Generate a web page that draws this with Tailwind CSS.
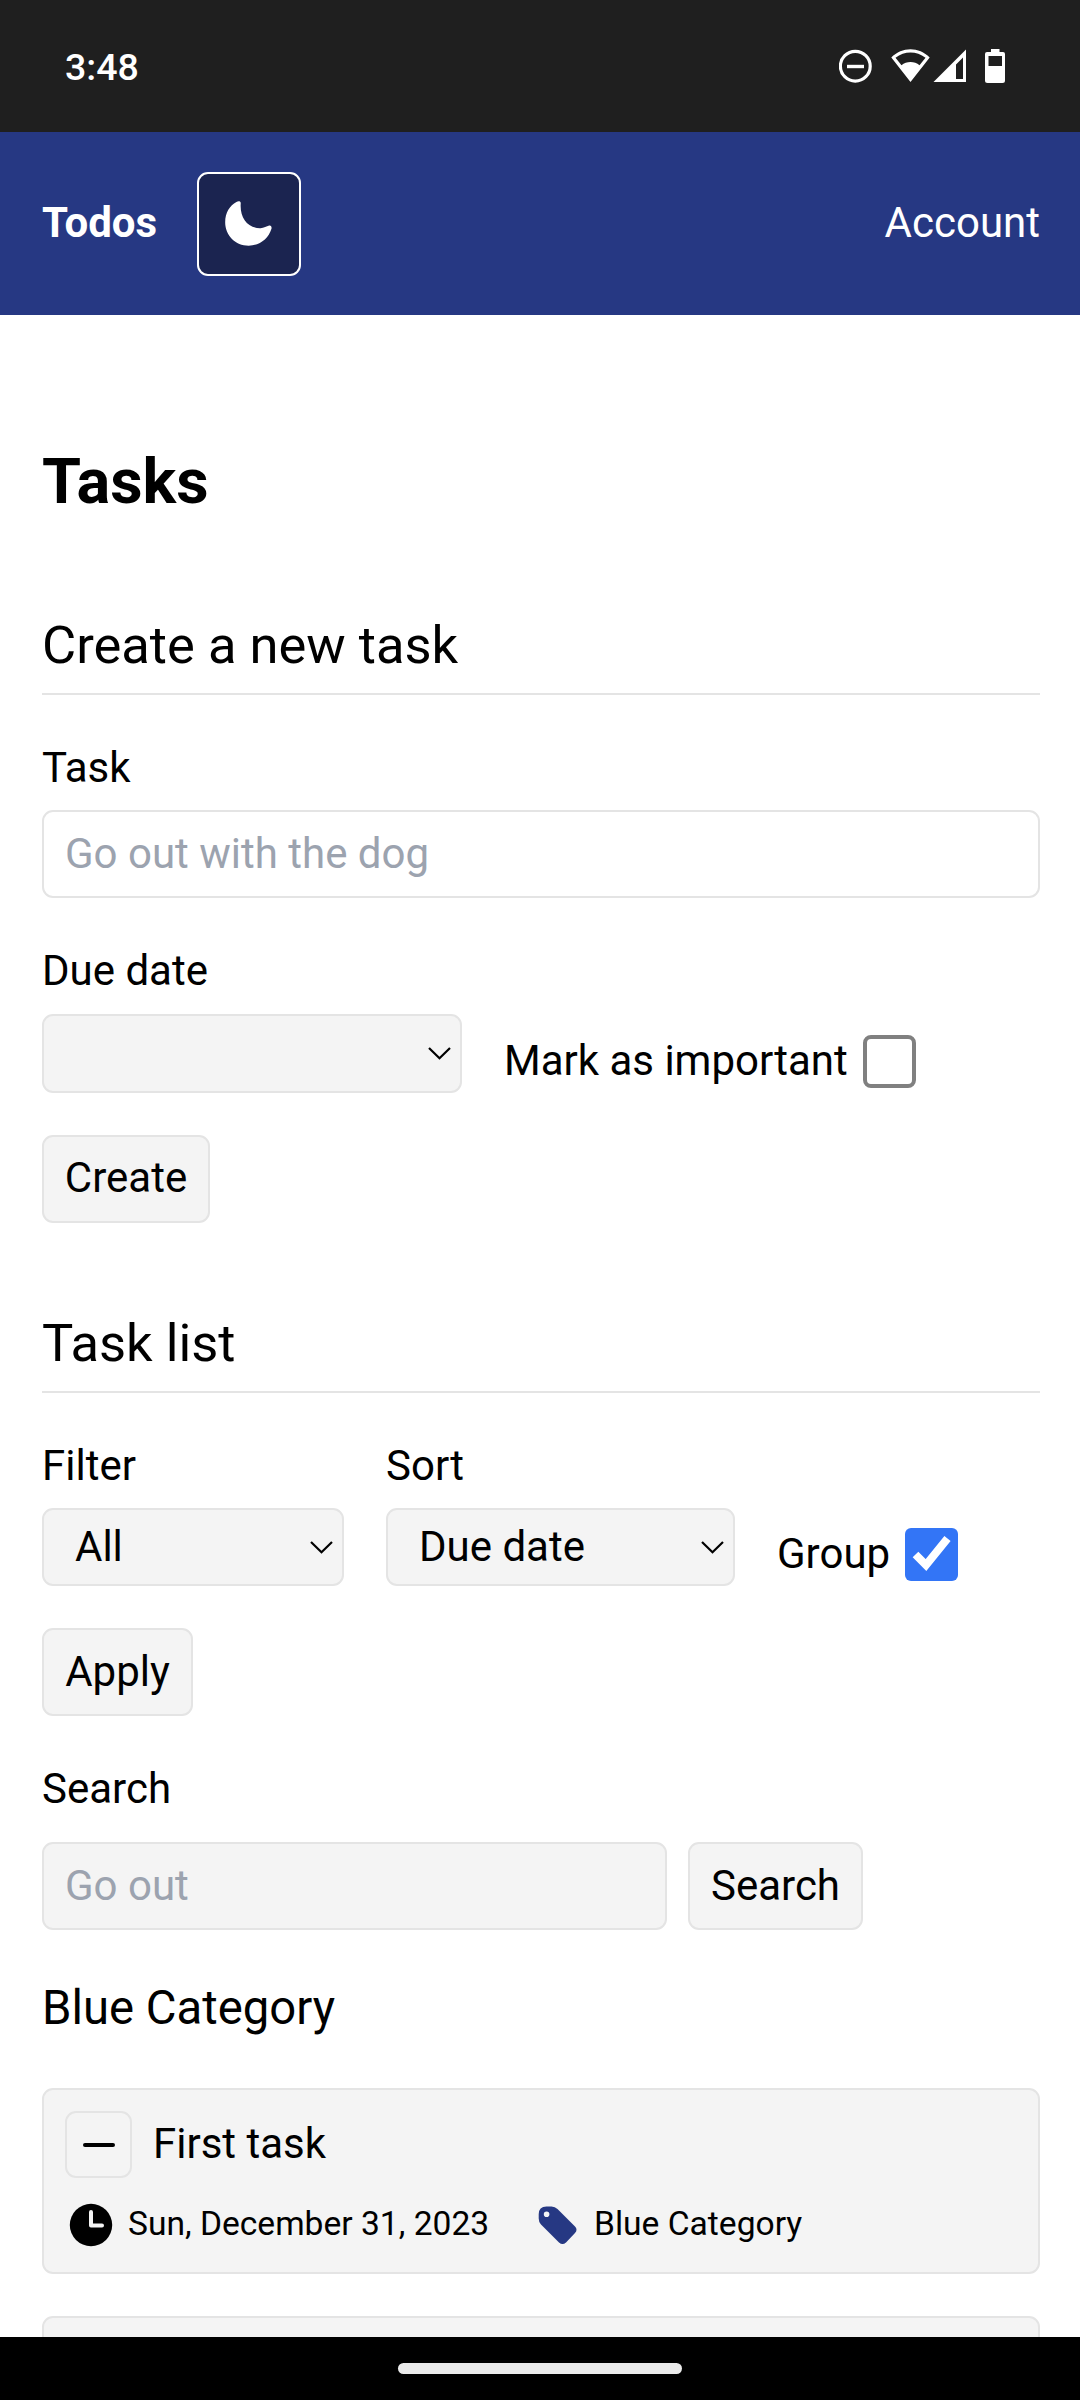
<!DOCTYPE html>
<html lang="en">
<head>
<meta charset="utf-8">
<title>Todos</title>
<script src="https://cdn.jsdelivr.net/npm/@tailwindcss/browser@4"></script>
</head>
<body class="w-[1080px] h-[2400px] flex flex-col overflow-hidden bg-white text-black font-[Roboto,sans-serif] text-[42px] leading-[63px]">
  <!-- System status bar -->
  <div class="h-[132px] shrink-0 bg-[#1f1f1f] text-white flex items-center justify-between pl-[65px] pr-[75px]">
    <span class="text-[37.5px] font-medium leading-[44px] pt-[2px]">3:48</span>
    <svg class="w-[166px] h-[34px]" viewBox="839 49 166 34" fill="#fff">
      <circle cx="855.3" cy="66.2" r="14.9" fill="none" stroke="#fff" stroke-width="3.2"/>
      <rect x="847" y="64.8" width="17" height="3.4"/>
      <path fill-rule="evenodd" d="M891.3 57.5C902 46.500 919 46.500 929.700 57.500L910.500 82ZM895.500 57.800L901.500 65.200C906.500 60.800 914.500 60.800 919.500 65.200L925.500 57.800C916.500 50.600 904.500 50.600 895.500 57.800Z"/>
      <path fill-rule="evenodd" d="M966 49.500V82H933.500ZM963 57.500L956 64.500V79H963Z"/>
      <path fill-rule="evenodd" d="M991 49H999.500V52H1003Q1005 52 1005 54V80.500Q1005 83 1002.500 83H987.500Q985 83 985 80.500V54Q985 52 987 52H991ZM988.500 56V66H1002V56Z"/>
    </svg>
  </div>

  <header class="h-[183px] shrink-0 bg-[#263883] text-white flex items-center pl-[42px] pr-[40px]">
    <a class="font-bold w-[154.5px] -mt-[2px]">Todos</a>
    <button class="size-[104px] rounded-[11px] border-2 border-white bg-[#1b2450] flex items-center justify-center">
      <svg class="w-[47px] h-[45px]" viewBox="678 601 141 136" fill="#fff">
        <path d="M712 604C718 600 726 601 725 609C722 650 745 684 785 683C795 682 803 678 811 675C817 674 819 679 818 685C808 716 782 736 749 736C709 736 678 705 678 665C678 637 692 614 712 604Z"/>
      </svg>
    </button>
    <a class="ml-auto -mt-[2px]">Account</a>
  </header>

  <main class="flex-1 min-h-0 overflow-hidden pl-[42px] pr-[40px]">
    <h1 class="mt-[135px] text-[63px] leading-[64px] font-bold">Tasks</h1>

    <section class="mt-[91px]">
      <h2 class="h-[90px] text-[52.5px] leading-[80px] border-b-2 border-[#e4e4e4]">Create a new task</h2>
      <label class="block mt-[41px]">Task</label>
      <div class="mt-[11px] h-[88px] rounded-[11px] border-2 border-[#e4e4e4] flex items-center px-[21px] pb-[2px] text-[#9ca3af]">Go out with the dog</div>
      <div class="mt-[41px] flex">
        <div class="w-[420px]">
          <label class="block">Due date</label>
          <div class="mt-[12px] h-[79px] rounded-[11px] border-2 border-[#e4e4e4] bg-[#f4f4f4] flex items-center justify-end pr-[9px]">
            <svg class="w-[23px] h-[13px]" viewBox="0 0 23 13" fill="none" stroke="#000" stroke-width="2.2"><path d="M1 1L11.500 11.300L22 1"/></svg>
          </div>
        </div>
        <div class="ml-[42px] mt-[96px] h-[53px] flex items-center gap-[15px]">
          <label class="w-[344px] whitespace-nowrap -mt-[3px]">Mark as important</label>
          <span class="size-[53px] rounded-[8px] border-4 border-[#808080]"></span>
        </div>
      </div>
      <button class="mt-[42px] h-[88px] w-[168px] rounded-[11px] border-2 border-[#e4e4e4] bg-[#f4f4f4] flex items-center justify-center pb-[3px]">Create</button>
    </section>

    <section class="mt-[80px]">
      <h2 class="h-[90px] text-[52.5px] leading-[80px] border-b-2 border-[#e4e4e4]">Task list</h2>
      <div class="mt-[41px] flex">
        <div class="w-[302px]">
          <label class="block">Filter</label>
          <div class="mt-[11px] h-[78px] rounded-[11px] border-2 border-[#e4e4e4] bg-[#f4f4f4] flex items-center justify-between pl-[31px] pr-[9px]">
            <span class="-mt-[2px]">All</span>
            <svg class="w-[23px] h-[13px]" viewBox="0 0 23 13" fill="none" stroke="#000" stroke-width="2.2"><path d="M1 1L11.500 11.300L22 1"/></svg>
          </div>
        </div>
        <div class="w-[349px] ml-[42px]">
          <label class="block">Sort</label>
          <div class="mt-[11px] h-[78px] rounded-[11px] border-2 border-[#e4e4e4] bg-[#f4f4f4] flex items-center justify-between pl-[31px] pr-[9px]">
            <span class="-mt-[2px]">Due date</span>
            <svg class="w-[23px] h-[13px]" viewBox="0 0 23 13" fill="none" stroke="#000" stroke-width="2.2"><path d="M1 1L11.500 11.300L22 1"/></svg>
          </div>
        </div>
        <div class="ml-[42px] mt-[94px] h-[53px] flex items-center gap-[15px]">
          <label class="w-[113px] whitespace-nowrap -mt-[2px]">Group</label>
          <span class="size-[53px] rounded-[6px] bg-[#3375f6] flex items-center justify-center">
            <svg class="size-[53px]" viewBox="0 0 53 53" fill="none" stroke="#fff" stroke-width="8"><path d="M10.500 26.500L21 37L42.500 10.500"/></svg>
          </span>
        </div>
      </div>
      <button class="mt-[42px] h-[88px] w-[151px] rounded-[11px] border-2 border-[#e4e4e4] bg-[#f4f4f4] flex items-center justify-center pb-[1px]">Apply</button>
      <label class="block mt-[41px]">Search</label>
      <div class="mt-[22px] flex gap-[21px]">
        <div class="h-[88px] w-[625px] rounded-[11px] border-2 border-[#e4e4e4] bg-[#f4f4f4] flex items-center px-[21px] pb-[2px] text-[#9ca3af]">Go out</div>
        <button class="h-[88px] w-[175px] rounded-[11px] border-2 border-[#e4e4e4] bg-[#f4f4f4] flex items-center justify-center pb-[1px]">Search</button>
      </div>

      <h3 class="mt-[42px] text-[47.25px] leading-[72px]">Blue Category</h3>
      <article class="mt-[44px] h-[186px] rounded-[11px] border-2 border-[#e4e4e4] bg-[#f4f4f4] pl-[21px] pt-[21px]">
        <div class="flex items-center h-[67px]">
          <button class="size-[67px] rounded-[11px] border-2 border-[#e4e4e4] flex items-center justify-center">
            <span class="w-[32px] h-[4px] rounded-full bg-black"></span>
          </button>
          <span class="ml-[21px] -mt-[2px]">First task</span>
        </div>
        <div class="flex items-center h-[52px] mt-[21px] text-[33.6px] leading-[50px]">
          <svg class="size-[52px]" viewBox="0 0 52 52">
            <circle cx="26" cy="26" r="21.200"/>
            <path d="M26 13V26.500H37" fill="none" stroke="#f4f4f4" stroke-width="4" stroke-linecap="round" stroke-linejoin="round"/>
          </svg>
          <span class="ml-[11px] w-[410px] -mt-[3px] whitespace-nowrap">Sun, December 31, 2023</span>
          <svg class="size-[39px]" viewBox="0 0 39 39">
            <path fill="#263883" fill-rule="evenodd" d="M8.500 .500H13.500Q17 .500 19.500 3L37 20.500Q40 23.700 37 27L28 36.500Q24.500 39.500 21 36.500L3 18.500Q.700 16 .700 12.500V8.300Q.700 .500 8.500 .500ZM8.600 5.500A2.800 2.800 0 1 0 8.600 11.100A2.800 2.800 0 1 0 8.600 5.500Z"/>
          </svg>
          <span class="ml-[17px] -mt-[3px]">Blue Category</span>
        </div>
      </article>
      <article class="mt-[42px] h-[186px] rounded-[11px] border-2 border-[#e4e4e4] bg-[#f4f4f4]"></article>
    </section>
  </main>

  <!-- System navigation bar -->
  <div class="h-[63px] shrink-0 bg-black flex justify-center pt-[26px]">
    <span class="w-[284px] h-[11px] rounded-full bg-[#ebebeb]"></span>
  </div>
</body>
</html>
